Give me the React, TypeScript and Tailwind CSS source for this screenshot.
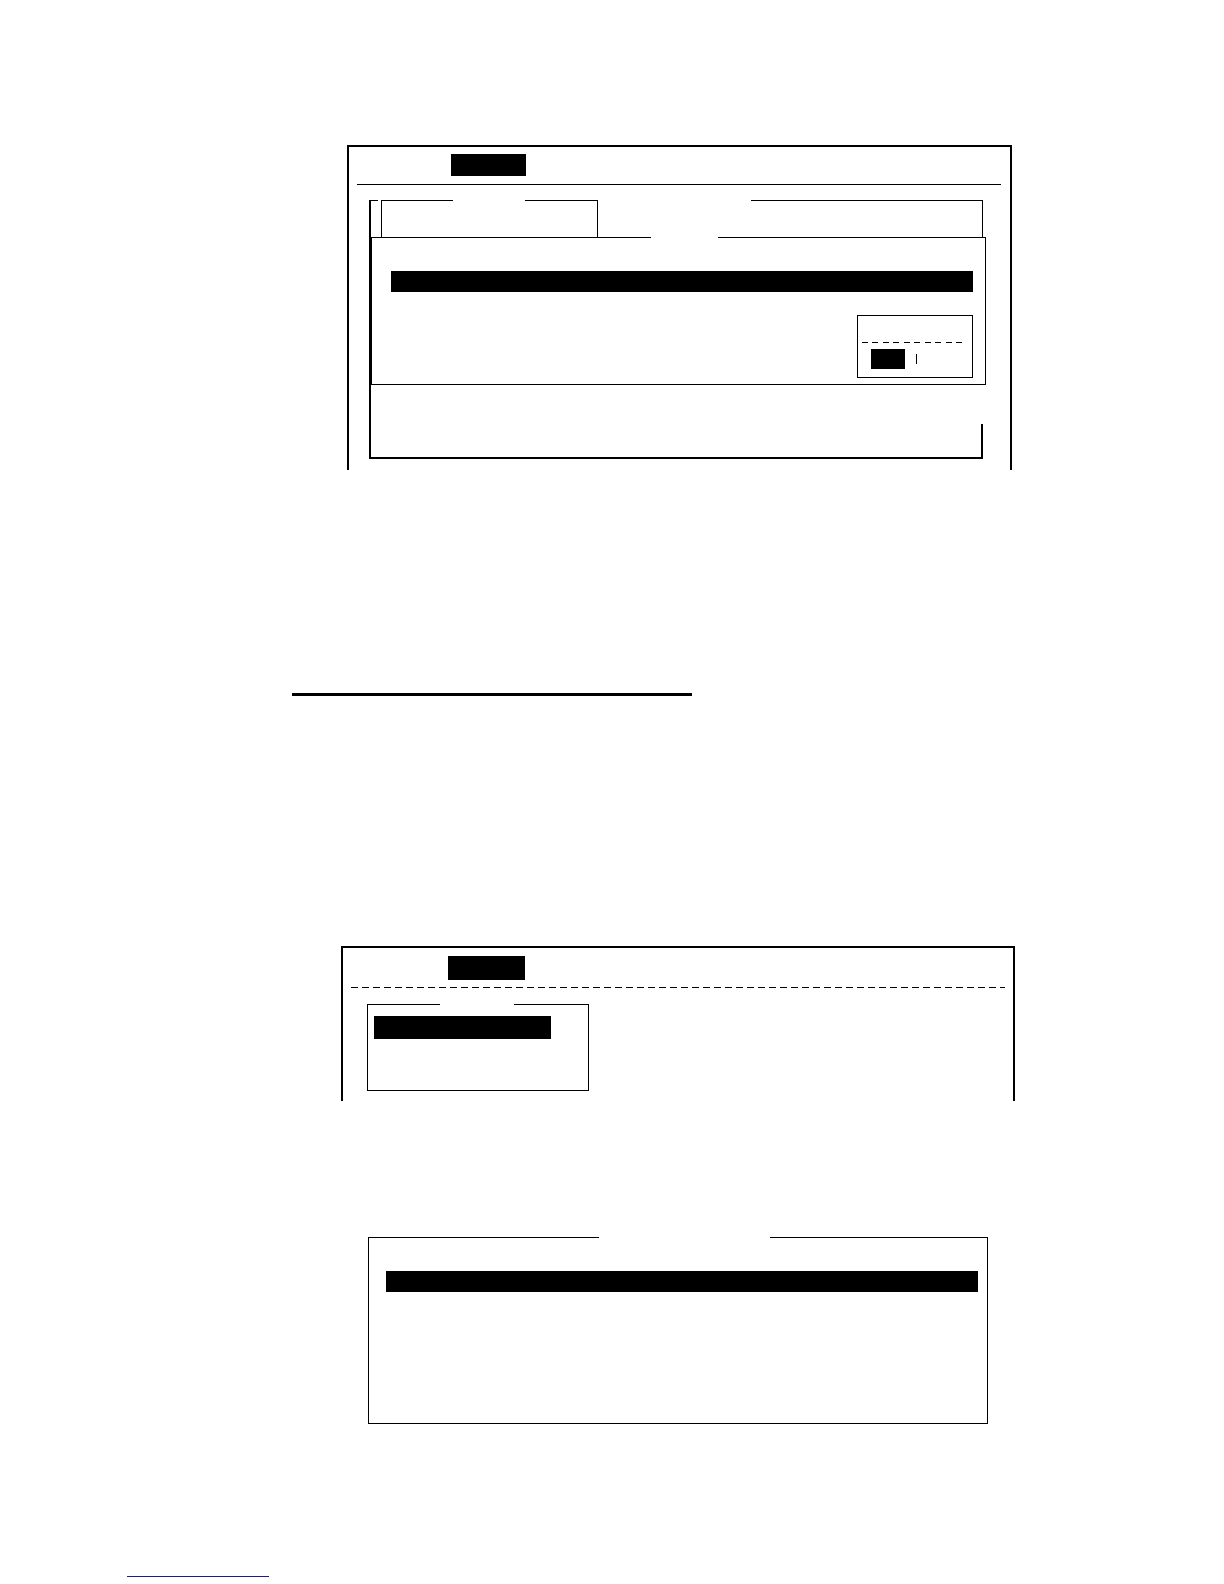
import React from "react";

function Seg({ w, on }: { w: number; on: boolean }) {
  return <div className={on ? "h-px bg-black shrink-0" : "h-px shrink-0"} style={{ width: w }} />;
}

export default function App() {
  return (
    <div className="w-[1224px] h-[1584px] bg-white overflow-hidden flex flex-col items-start font-['Liberation_Sans',sans-serif]">
      {/* Figure 1 */}
      <div className="mt-[145px] ml-[347px] w-[665px] h-[325px] shrink-0 border-2 border-b-0 border-black flex flex-col items-start">
        <div className="mt-[7px] ml-[102px] w-[75px] h-[22px] bg-black" />
        <div className="mt-[8px] ml-[8px] w-[644px] h-px bg-black" />
        <div className="mt-[15px] ml-[20px] w-[614px] border-l-2 border-b-2 border-black flex flex-col items-start">
          {/* tab row */}
          <div className="flex items-start h-[37px] w-[612px]">
            <div className="w-[7px] h-px bg-black shrink-0" />
            <div className="w-[3px] shrink-0" />
            <div className="w-[217px] h-[37px] flex flex-col shrink-0">
              <div className="flex">
                <Seg w={72} on />
                <Seg w={72} on={false} />
                <Seg w={73} on />
              </div>
              <div className="flex-1 border-l border-r border-black" />
            </div>
            <div className="w-[153px] shrink-0" />
            <div className="w-[232px] h-[37px] border-t border-r border-black shrink-0" />
          </div>
          {/* front panel */}
          <div className="w-[615px] flex flex-col shrink-0">
            <div className="flex">
              <Seg w={280} on />
              <Seg w={67} on={false} />
              <Seg w={268} on />
            </div>
            <div className="h-[147px] border-l border-r border-b border-black flex flex-col items-start">
              <div className="mt-[33px] ml-[19px] w-[582px] h-[21px] bg-black" />
              <div className="mt-[23px] ml-[485px] w-[116px] h-[63px] border border-black flex flex-col items-start">
                <div className="mt-[26px] ml-[4px] w-[105px] h-px bg-[repeating-linear-gradient(to_right,#000_0px,#000_6px,transparent_6px,transparent_10.5px)]" />
                <div className="mt-[6px] ml-[13px] flex items-start">
                  <div className="w-[34px] h-[20px] bg-black" />
                  <div className="ml-[11px] mt-[5px] w-px h-[10px] bg-black" />
                </div>
              </div>
            </div>
          </div>
          {/* lower area */}
          <div className="w-[612px] h-[72px] flex flex-col justify-end">
            <div className="h-[33px] border-r-2 border-black" />
          </div>
        </div>
      </div>

      {/* Separator */}
      <div className="mt-[223px] ml-[292px] w-[400px] h-[3px] bg-black shrink-0" />

      {/* Figure 2 */}
      <div className="mt-[250px] ml-[341px] w-[674px] h-[155px] shrink-0 border-2 border-b-0 border-black flex flex-col items-start">
        <div className="mt-[8px] ml-[105px] w-[77px] h-[24px] bg-black" />
        <div className="mt-[7px] ml-[8px] w-[654px] h-px bg-[repeating-linear-gradient(to_right,#000_0px,#000_7px,transparent_7px,transparent_11px)]" />
        <div className="mt-[16px] ml-[24px] w-[222px] flex flex-col">
          <div className="flex">
            <Seg w={73} on />
            <Seg w={74} on={false} />
            <Seg w={75} on />
          </div>
          <div className="h-[86px] border-l border-r border-b border-black flex flex-col items-start">
            <div className="mt-[11px] ml-[6px] w-[177px] h-[23px] bg-black" />
          </div>
        </div>
      </div>

      {/* Figure 3 */}
      <div className="mt-[136px] ml-[368px] w-[620px] flex flex-col shrink-0">
        <div className="flex">
          <Seg w={231} on />
          <Seg w={171} on={false} />
          <Seg w={218} on />
        </div>
        <div className="h-[186px] border-l border-r border-b border-black flex flex-col items-start">
          <div className="mt-[33px] ml-[17px] w-[592px] h-[21px] bg-black" />
        </div>
      </div>

      {/* Footer link underline */}
      <div className="mt-[152px] ml-[127px] w-[142px] h-px bg-[#1c1c8f] shrink-0" />
    </div>
  );
}
